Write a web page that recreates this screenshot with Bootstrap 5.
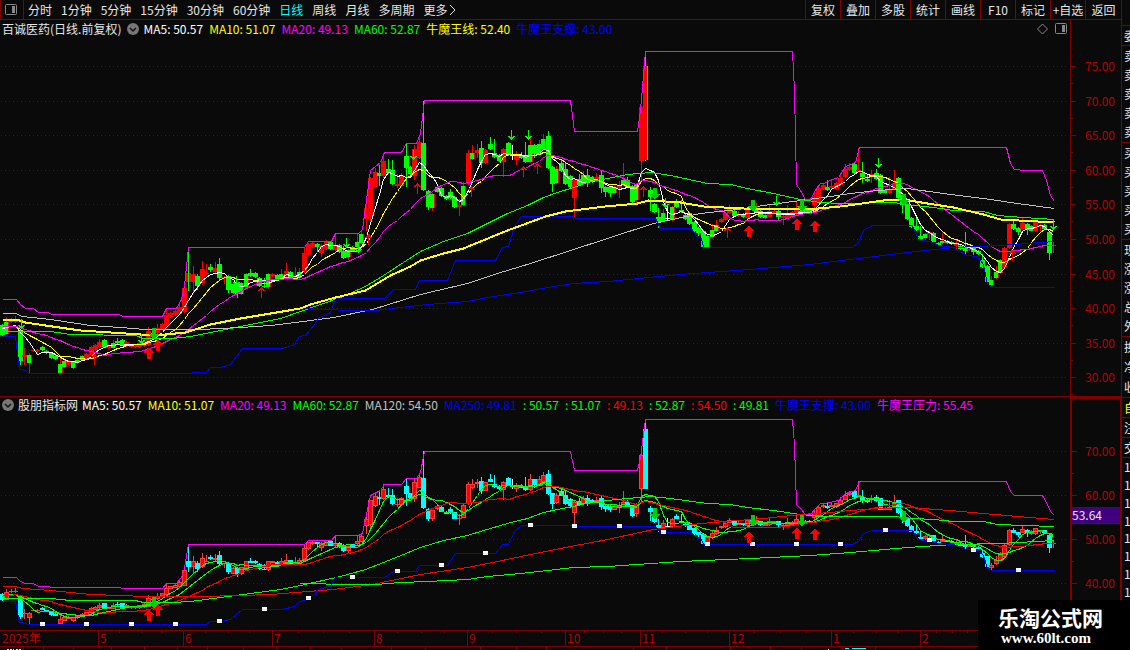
<!DOCTYPE html>
<html lang="zh-CN">
<head>
<meta charset="utf-8">
<meta name="viewport" content="width=device-width, initial-scale=1">
<title>百诚医药 日线</title>
<link href="https://cdn.jsdelivr.net/npm/bootstrap@5.3.0/dist/css/bootstrap.min.css" rel="stylesheet">
<style>
:root { --line: #800000; --ink: #0a0a0a; }
body { background: var(--ink); color: #e6e6e6; font: 12px/18px "Noto Sans CJK SC", sans-serif; }
svg { display: block; }
.tools { height: 20px; border-bottom: 1px solid var(--line); }
.tools button { background: none; border: 0; padding: 0; color: #e6e6e6; white-space: nowrap; line-height: 18px; }
.tools .panel-toggle { width: 24px; height: 19px; border-left: 1px solid var(--line); border-right: 1px solid var(--line); }
.periods { gap: 9px; padding-left: 4px; }
.periods button.current { color: #00ffff; }
.actions button { width: 35px; height: 19px; border-left: 1px solid var(--line); }
.actions button:last-child { width: 36px; }
.pane-price { flex: 377 1 0; border-bottom: 1px solid var(--line); }
.pane-study { flex: 233 1 0; }
.legend-bar { height: 18px; gap: 6px; padding: 0 3px 0 2px; white-space: nowrap; flex: none; }
.legend-bar button { background: none; border: 0; padding: 0; line-height: 0; }
.legend-bar .series { display: flex; gap: 6px; margin-left: -2px; }
.pane-study .legend-bar { padding-bottom: 2px; }
.plot { flex: 1 1 0; min-height: 0; overflow: hidden; }
.scale-col { width: 51px; flex: none; border-left: 1px solid var(--line); overflow: hidden; }
.pane-study .scale-col { border: 2px solid var(--line); border-bottom: 0; width: 52px; margin-right: -1px; }
.time-axis { height: 17px; flex: none; border: solid var(--line); border-width: 1px 0; }
.time-axis svg { overflow: visible; }
.foot-strip { height: 3px; flex: none; overflow: hidden; }
.quotes { width: 9px; flex: none; border-left: 1px solid var(--line); overflow: hidden; padding-top: 25px; }
.quotes .block { border-top: 1px solid var(--line); padding-left: 2px; flex: none; }
.quotes .block span { flex: 1 1 0; white-space: nowrap; display: flex; align-items: center; line-height: 14px; }
.h-one { height: 20px; } .h-five { height: 97px; } .h-three { height: 61px; } .h-list { height: 144px; }
.c-white { color: #fff; } .c-yellow { color: #ff0; } .c-magenta { color: #f0f; } .c-green { color: #0f0; }
.c-blue { color: #00f; } .c-grey { color: #c0c0c0; } .c-red { color: #f00; }
.site-mark { width: 152px; height: 50px; background: #000; color: #fff; padding: 5px 0 0 20px; }
.site-mark .site-name { font-size: 21px; line-height: 24px; font-weight: 700; }
.site-mark .site-url { font: 700 15px/18px "Liberation Serif", serif; padding-left: 3px; }
</style>
</head>
<body>
<div class="d-flex vh-100 position-relative overflow-hidden">
  <main class="d-flex flex-column flex-grow-1" style="min-width:0">
    <div class="tools d-flex flex-shrink-0">
      <button class="panel-toggle d-flex align-items-center" aria-label="面板"><svg width="20" height="14" fill="none"><rect x="4.5" y="1.5" width="11" height="10" rx="1" stroke="#888"/><rect x="11" y="3" width="3" height="7" fill="#888"/></svg></button>
      <nav class="periods d-flex">
        <button>分时</button><button>1分钟</button><button>5分钟</button><button>15分钟</button><button>30分钟</button><button>60分钟</button><button class="current">日线</button><button>周线</button><button>月线</button><button>多周期</button>
        <button class="d-flex align-items-center">更多<svg width="10" height="12" fill="none" stroke="#e6e6e6"><path d="M3 1l5 5-5 5"/></svg></button>
      </nav>
      <div class="actions d-flex ms-auto">
        <button>复权</button><button>叠加</button><button>多股</button><button>统计</button><button>画线</button><button>F10</button><button>标记</button><button>+自选</button><button>返回</button>
      </div>
    </div>

    <section class="pane-price d-flex">
      <div class="d-flex flex-column flex-grow-1" style="min-width:0">
        <div class="legend-bar d-flex align-items-center">
          <span>百诚医药(日线.前复权)</span>
          <button aria-label="展开"><svg width="12" height="12" fill="none"><circle cx="6" cy="6" r="6" fill="#777"/><path d="M3 5l3 3 3-3" stroke="#111" stroke-width="1.5"/></svg></button>
          <div class="series"><span class="c-white">MA5: 50.57</span><span class="c-yellow">MA10: 51.07</span><span class="c-magenta">MA20: 49.13</span><span class="c-green">MA60: 52.87</span><span class="c-yellow">牛魔王线: 52.40</span><span class="c-blue">牛魔王支撑: 43.00</span></div>
          <svg class="ms-auto" width="12" height="12" fill="none" stroke="#888"><path d="M.5 6L5.500 1 10.500 6 5.500 11z"/></svg>
          <svg width="12" height="12" fill="none"><rect x=".5" y=".5" width="11" height="10" rx="1" stroke="#888"/><rect x="7" y="2" width="3" height="7" fill="#888"/></svg>
        </div>
        <div class="plot"><svg id="pricePlot" width="100%" height="100%"></svg></div>
      </div>
      <div class="scale-col"><svg id="priceScale" width="50" height="100%"></svg></div>
    </section>

    <section class="pane-study d-flex">
      <div class="d-flex flex-column flex-grow-1" style="min-width:0">
        <div class="legend-bar d-flex align-items-center">
          <span class="d-flex align-items-center" style="gap:4px"><button aria-label="展开"><svg width="12" height="12" fill="none"><circle cx="6" cy="6" r="6" fill="#777"/><path d="M3 5l3 3 3-3" stroke="#111" stroke-width="1.5"/></svg></button>股朋指标网</span>
          <div class="series"><span class="c-white">MA5: 50.57</span><span class="c-yellow">MA10: 51.07</span><span class="c-magenta">MA20: 49.13</span><span class="c-green">MA60: 52.87</span><span class="c-grey">MA120: 54.50</span><span class="c-blue">MA250: 49.81</span><span class="c-green">: 50.57</span><span class="c-green">: 51.07</span><span class="c-red">: 49.13</span><span class="c-green">: 52.87</span><span class="c-red">: 54.50</span><span class="c-green">: 49.81</span><span class="c-blue">牛魔王支撑: 43.00</span><span class="c-magenta">牛魔王压力: 55.45</span></div>
        </div>
        <div class="plot"><svg id="studyPlot" width="100%" height="100%"></svg></div>
      </div>
      <div class="scale-col"><svg id="studyScale" width="48" height="100%"></svg></div>
    </section>

    <div class="time-axis"><svg id="timeAxis" width="100%" height="15"></svg></div>
    <div class="foot-strip"><svg width="100%" height="3" shape-rendering="crispEdges"><path d="M7 2h7m2 0h6m29 1h1m776-1h1" stroke="#e6e6e6" stroke-dasharray="2 1"/><path d="M845 1.500h4m3 0h14" stroke="#0ff"/><path d="M23.500 0v3m20-3v3m30-3v3m38-3v3m33-3v3m33-3v3m30-3v3m36-3v3m33-3v3m34-3v3m31-3v3m50-3v3m34-3v3m55-3v3m36-3v3m30-3v3m87-3v3m33-3v3m64-3v3m40-3v3m31-3v3m41-3v3m33-3v3" stroke="#800000"/></svg></div>
  </main>

  <aside class="quotes d-flex flex-column">
    <div class="block h-one d-flex"><span>委</span></div>
    <div class="block h-five d-flex flex-column"><span>卖</span><span>卖</span><span>卖</span><span>卖</span><span>卖</span></div>
    <div class="block h-five d-flex flex-column"><span>买</span><span>买</span><span>买</span><span>买</span><span>买</span></div>
    <div class="block h-five d-flex flex-column"><span>现</span><span>涨</span><span>涨</span><span>总</span><span>外</span></div>
    <div class="block h-three d-flex flex-column"><span>换</span><span>净</span><span>收</span></div>
    <div class="block h-one d-flex c-yellow"><span>自</span></div>
    <div class="block h-one d-flex"><span>注</span></div>
    <div class="block h-one d-flex"><span>交</span></div>
    <div class="block h-list d-flex flex-column"><span>1</span><span>1</span><span>1</span><span>1</span><span>1</span><span>1</span><span>1</span><span>1</span></div>
  </aside>

  <div class="site-mark position-absolute bottom-0 end-0">
    <div class="site-name">乐淘公式网</div>
    <div class="site-url">www.60lt.com</div>
  </div>
</div>

<script src="https://cdn.jsdelivr.net/npm/bootstrap@5.3.0/dist/js/bootstrap.bundle.min.js"></script>
<script>
// One bar per entry: kind, body top, body bottom, high, low ("-" = no shadow).
// Levels run downwards; 66.5 is a price of 75.00 and 6.911 levels make one yuan.
const BARS = `G 325 335|M 322 334 317|R 320 322 318|R 320 322 316|G 330 361 - 365|R 355 357 348 365|M 355 363 353 373|R 350 351 348|R 350 351 - 354|G 347 350 346|G 351 353|G 353 358|G 356 359|M 364 373 356|M 361 367|R 361 364|M 362 368|M 360 363 358|M 356 360|R 354 359
R 347 355|R 345 350|R 342 347 339|G 340 347|R 346 348|M 343 348 340|G 341 343 338|G 340 345|R 342 346|R 345 347|R 345 347|R 343 347|R 341 346|R 331 345 327|G 333 335 330 340|R 328 333 324|R 324 329|R 315 326 309|R 313 317|R 311 315
R 307 314 304|R 288 312 284|N 273 282 252 291|R 274 282 266 294|G 276 286 274 290|R 269 283 261 285|R 273 274 264 275|G 267 270 264 272|R 268 272 262|G 264 278 258 281|R 277 278 - 284|G 276 290 - 293|M 284 293|G 284 294 - 298|M 283 294|M 274 287|G 273 276 269|G 273 277|G 278 286|G 286 287 278
M 274 287 - 289|R 274 276|G 275 279|M 274 279 269|R 271 276 263|G 272 278|R 276 278 267|M 272 278 268|R 253 272 247|R 244 255|R 243 247 241|G 244 247 - 252|R 245 253 - 257|R 241 249|G 242 249|R 245 250 234|G 245 252|G 251 258 246|M 250 257 - 260|G 247 251
M 242 247 234|M 234 243 230|R 208 219 204 231|R 178 216 - 222|R 172 187 168|G 173 176 165 186|R 161 176 153 178|G 169 173 159|G 170 184 160|R 184 186 174 188|R 175 186 173|G 156 168 144 187|G 167 174|R 149 176 145 180|R 142 158 137|G 143 190 101|G 191 207 - 210|M 194 208 - 211|M 187 192 184|G 188 196
G 196 199|G 192 198 189|G 197 207|R 205 207 199 216|M 186 205 182|R 153 184 150|M 153 159 145|R 150 153 144 158|G 148 163 141 168|R 150 163|G 144 149 137|G 153 157 139|G 155 161|R 149 162 - 177|G 143 155|W 154 155 145 160|R 155 160 151 165|G 156 158 152|G 155 162 142|M 145 162 136
G 145 154 - 158|M 144 155 140|M 139 149 134|G 136 168 131|G 167 184 - 192|M 169 183 166 184|G 163 171 160|G 169 184 163|G 176 187|R 180 198 - 218|G 179 185 174|M 175 184 171|G 175 183 169 187|G 177 182|R 177 181 173|G 175 188 171 193|G 187 192 - 197|G 187 193 - 197|M 187 193|R 186 188 181 198
M 180 185 163|G 180 187 177|G 186 202 - 204|M 184 200 - 204|R 107 161 - 182|N 66 160 57|G 190 197 187 211|G 204 212|G 217 222 208 228|M 213 221 209|W 218 219 205|M 207 220|G 203 207 199|G 210 212 200|G 215 219|G 213 224|G 222 231|G 228 233 - 236|G 231 247|M 236 247
M 230 237 224|M 225 231 220|R 219 222|R 213 220|R 209 213 205|G 211 216|R 215 216 211|G 214 217|R 209 218|G 208 210|M 209 213 203|G 211 217|M 215 218|R 211 217 204|R 211 213|G 211 217 - 221|R 216 218 - 225|R 213 218 205|R 212 217|R 208 214 201
G 211 213 202|G 210 212|G 210 213|R 198 205 192 214|R 188 202|R 185 189|G 187 190 180|R 186 188 180|R 183 189|R 178 185 173|R 169 177 164|R 167 170 163|G 164 173|R 170 171 148|G 173 177 162 183|G 179 181 175|R 174 175 170 183|G 173 179 169|G 175 193|M 190 193
R 189 193 177|R 183 189 170|G 178 198|G 195 205 - 213|G 205 219|G 218 227|G 226 230 216|G 236 239 226|M 234 238 - 241|R 232 234 - 240|G 233 242|G 243 245|M 241 243 233|G 241 243|G 242 244|R 244 246 240 250|G 246 249|G 247 251 232 255|R 249 250|G 247 252 - 255
G 251 254|G 260 267 254|G 266 282|M 280 285 276 287|M 272 278 266|M 260 273|R 248 267|R 224 248|G 224 229 221|G 228 232 - 235|R 223 229 217|G 224 230 - 235|M 226 231|R 222 231|R 225 227 - 231|G 225 229|G 232 253 - 260|R 245 246 241 253`
  .split(/[|\n]/).map(s => {
    const p = s.trim().split(' '), t = +p[1], b = +p[2];
    return { k: p[0], t, b, h: p[3] && p[3] !== '-' ? +p[3] : t - 1, l: p[4] ? +p[4] : b + 1 };
  });

const pts = s => s.split(' ').map(p => p.split(',').map(Number));
const pressure = pts('2,299 16,299 20,304 25,308 33,308 38,312 47,312 52,314 118,314 123,316 162,316 166,308 176,308 181,299 184,285 188,247 304,247 308,241 331,241 335,233 358,233 362,229 370,170 380,162 384,152 401,152 406,143 416,143 420,133 424,100 570,100 574,131 637,131 640,110 645,51 792,51 794,90 796,184 800,190 805,199 810,199 816,188 820,183 824,183 829,180 838,177 845,166 855,162 859,147 1006,147 1010,163 1014,169 1025,170 1042,170 1046,180 1050,195 1054,201');
const support = pts('2,336 15,336 19,369 25,370 28,373 178,373 206,372 210,367 220,367 230,364 236,356 242,348 282,348 294,344 299,336 305,335 315,323 317,318 330,312 335,298 384,298 393,289 415,289 419,280 447,280 455,260 495,260 502,247 508,246 514,226 521,216 572,216 575,218 655,218 660,228 691,228 696,236 701,238 703,247 852,247 858,242 863,230 872,225 912,225 916,235 921,240 930,241 938,245 953,247 966,255 977,256 983,264 987,284 992,287 1054,287');
const ma60 = pts('2,331 50,331 70,334 135,335 143,338 172,338 190,336 220,330 250,324 280,318 300,311 340,297 365,286 383,275 403,262 420,251 443,241 467,233 483,225 507,213 527,205 543,197 557,192 573,187 590,181 607,178 627,174 650,172 670,175 707,183 730,184 747,188 773,193 800,199 820,202 840,203 893,202 913,205 933,207 953,210 983,211 997,215 1023,217 1054,219');
const ma120 = pts('2,313 15,313 22,316 50,319 70,322 90,325 120,327 145,329 200,329 240,327 270,325 295,322 333,317 372,309 420,294 467,283 497,273 530,263 570,250 607,238 653,223 700,213 737,209 763,205 800,200 830,196 850,193 877,190 907,188 950,194 983,198 1017,203 1054,208');
const ma250 = pts('300,308 350,310 375,310 400,307 427,304 467,301 487,297 520,292 547,287 573,283 607,281 680,274 750,269 810,264 850,259 907,252 953,247 1000,245 1054,241');
const bull = pts('2,319 16,319 25,322 45,325 80,330 110,332 140,334 165,334 185,332 210,324 240,318 270,313 300,308 310,304 335,297 365,290 390,275 410,266 420,260 443,253 463,248 475,243 507,230 545,216 565,211 605,206 637,203 648,200 680,202 703,206 743,208 807,209 840,206 883,200 903,199 927,203 953,207 983,214 1000,219 1037,221 1054,222');

const barX = i => 2.4 + 4.436 * i;
const closes = BARS.map(b => 'GN'.includes(b.k) ? b.b : b.t);
// The days before the first bar traded near level 326.
const average = n => closes.map((_, i) => {
  let sum = 0;
  for (let j = i - n + 1; j <= i; j++) sum += j < 0 ? 326 : closes[j];
  return [barX(i), sum / n];
});
const ma5 = average(5), ma10 = average(10), ma20 = average(20);

const rect = (x, y, w, h, c, extra = '') => `<rect x="${x}" y="${y}" width="${w}" height="${h}" fill="${c}" ${extra}/>`;
const text = (x, y, s, c) => `<text x="${x}" y="${y}" fill="${c}">${s}</text>`;
const levelAt = (line, x) => {
  for (let i = 1; i < line.length; i++) if (line[i][0] >= x) {
    const [a, b] = [line[i - 1], line[i]];
    return a[1] + (b[1] - a[1]) * (x - a[0]) / (b[0] - a[0]);
  }
};
const arrow = (x, y, up) => up
  ? `<path d="M${x} ${y}l5 6h-3v6h-4v-6h-3z" fill="#f00"/>`
  : `<path d="M${x} ${y + 12}l5 -6h-3v-6h-4v6h-3z" fill="#00d000"/>`;
const thinArrow = (x, y, up) => up
  ? `<path d="M${x + .5} ${y}v10m-3 -7l3 -3 3 3" fill="none" stroke="#f00"/>`
  : `<path d="M${x + .5} ${y}v9m-3 -3l3 3 3 -3" fill="none" stroke="#0f0"/>`;

const upMarks = [[149, 347], [158, 339], [749, 225], [797, 218], [815, 220]];
const downMarks = [[154, 328], [655, 188], [753, 200], [802, 200], [904, 194]];

function drawPlot(svg, o) {
  const W = svg.clientWidth, H = svg.clientHeight, kx = W / 1070, ky = H / o.span;
  const X = x => Math.floor(x * kx), Y = v => Math.round((o.map(v) - o.top) * ky);
  const line = (p, c, w = 1) => `<polyline points="${p.map(q => (X(q[0]) + .5) + ',' + (Y(q[1]) + .5)).join(' ')}" fill="none" stroke="${c}" stroke-width="${w}"/>`;
  let s = '';
  o.grid.forEach(v => { s += `<path d="M1 ${Y(v) + .5}H${W - 3}" stroke="#800000" stroke-dasharray="1 3"/>`; });
  BARS.forEach((b, i) => {
    const x = X(barX(i)), h = Y(b.h), t = Y(b.t), n = Math.max(1, Y(b.b) - t), len = Y(b.l) - h;
    if (b.k === 'W') { s += rect(x, h, 1, len, '#fff') + rect(x - 2, t, 5, 1, '#fff'); return; }
    if (o.study) {
      const c = 'GN'.includes(b.k) ? '#00ffff' : '#ff3c3c';
      s += rect(x, h, 1, len, c) + rect(x - 2, t, 5, n, c);
      if (c !== '#00ffff' && n > 2) s += rect(x - 1, t + 1, 3, n - 2, '#f00');
    } else if (b.k === 'N') s += rect(x - 2, t, 5, n, '#f00') + rect(x + (n > 30 ? 2 : 0), t, 1, n, '#0f0') + rect(x, h, 1, t - h, '#0f0') + rect(x, t + n, 1, h + len - t - n, '#0f0');
    else if (b.k === 'M') s += rect(x, h, 1, len, '#f00') + rect(x - 2, t, 5, n, '#f00') + rect(x - 2, t, 4, n, '#0f0');
    else { const c = b.k === 'G' ? '#0f0' : '#f00'; s += rect(x, h, 1, len, c) + rect(x - 2, t, 5, n, c); }
  });
  o.lines.forEach(l => { s += line(...l); });
  if (o.study) for (let i = 9; i < BARS.length; i += 10) {
    const x = X(barX(i)) - 2, y = Y(levelAt(support, barX(i)));
    s += rect(x, y - 2, 5, 4, '#fff') + rect(x, y, 5, 1, '#e0e0ff');
  }
  upMarks.forEach(m => { s += arrow(X(m[0]), Y(m[1]) + (o.study ? 1 : 0), true); });
  downMarks.forEach(m => { s += arrow(X(m[0]), Y(m[1]) + (o.study ? 1 : 0), false); });
  if (!o.study) {
    [[21, 319], [141, 334], [346, 238], [358, 243], [413, 150], [511, 130], [528, 130], [776, 196], [878, 158], [665, 198], [236, 276], [1053, 220]].forEach(m => { s += thinArrow(X(m[0]), Y(m[1]), false); });
    [[94, 355], [261, 288], [368, 235], [417, 184], [471, 187], [523, 167], [537, 164], [643, 187], [727, 228], [1012, 251]].forEach(m => { s += thinArrow(X(m[0]), Y(m[1]), true); });
  }
  svg.innerHTML = `<g shape-rendering="crispEdges">${s}</g>`;
}

const same = v => v, lower = v => 429 + (v - 66) * 0.6367;
const level = p => 66.2 + (75 - p) * 6.911;

function drawAll() {
  const q = id => document.getElementById(id);
  const prices = [75, 70, 65, 60, 55, 50, 45, 40, 35, 30];
  drawPlot(q('pricePlot'), { map: same, top: 38, span: 358, grid: prices.map(level),
    lines: [[ma5, '#fff'], [ma10, '#ff0'], [ma20, '#f0f'], [ma60, '#0f0'], [ma120, '#c0c0c0'], [ma250, '#00f'], [support, '#00f'], [pressure, '#f0f'], [bull, '#ff0', 2]] });
  drawPlot(q('studyPlot'), { study: true, map: lower, top: 415, span: 215, grid: [70, 60, 50, 40].map(level),
    lines: [[ma5, '#0f0'], [ma10, '#0f0'], [ma20, '#f00'], [ma60, '#0f0'], [ma120, '#f00'], [ma250, '#0f0'], [support, '#00f'], [pressure, '#f0f']] });

  const scale = (svg, list, top, span, half, tx) => {
    const k = svg.clientHeight / span;
    let s = '';
    list.forEach(([p, y]) => {
      const v = Math.round((y - top) * k);
      s += rect(0, v, 5, 1, '#800000') + rect(0, v + Math.round(half * k), 2, 1, '#800000') + text(tx, v + 5, p.toFixed(2), '#b80000');
    });
    return s;
  };
  q('priceScale').innerHTML = scale(q('priceScale'), prices.map(p => [p, level(p)]), 20, 376, 17, 14);
  const box = q('studyScale');
  const tag = Math.round((507 - 399) * box.clientHeight / 231);
  box.innerHTML = scale(box, [70, 60, 50, 40].map(p => [p, lower(level(p))]), 399, 231, 22, 13)
    + rect(0, tag, 48, 17, '#400080') + rect(0, tag, 48, 1, '#800000') + rect(0, tag + 16, 48, 1, '#800000') + text(0, tag + 13, '53.64', '#e6e6e6');

  const axis = q('timeAxis'), kx = axis.clientWidth / 1121;
  const X = x => Math.round(x * kx);
  let a = text(2, 12, '2025年', '#b80000');
  [[98, 5], [183, 6], [272, 7], [374, 8], [467, 9], [565, 10], [640, 11], [729, 12], [831, 1], [920, 2]].forEach(([x, m]) => {
    a += rect(X(x), 0, 1, 15, '#800000') + text(X(x) + 2, 12, m, '#b80000');
  });
  [119, 141, 162, 205, 228, 249, 298, 323, 349, 397, 421, 444, 492, 516, 541, 584, 603, 621, 662, 685, 707, 754, 780, 806, 853, 876, 898, 936, 952, 967].forEach(x => { a += rect(X(x), 0, 1, 2, '#800000'); });
  axis.innerHTML = a;
}
drawAll();
window.addEventListener('resize', drawAll);
</script>
</body>
</html>
